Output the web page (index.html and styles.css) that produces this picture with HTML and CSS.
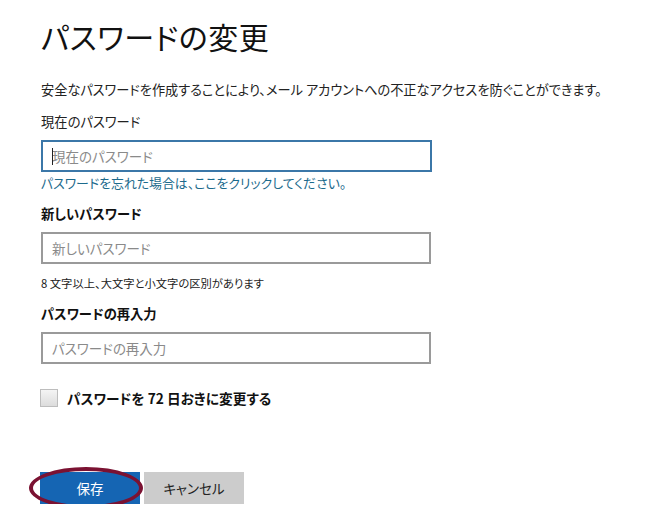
FILE: index.html
```html
<!DOCTYPE html>
<html lang="ja">
<head>
<meta charset="utf-8">
<title>パスワードの変更</title>
<link rel="stylesheet" href="styles.css">
</head>
<body>
<main class="page">
  <h1 class="title">パスワードの変更</h1>
  <p class="intro">安全なパスワードを作成することにより、メール アカウントへの不正なアクセスを防ぐことができます。</p>

  <div class="field">
    <label class="label" for="cur">現在のパスワード</label>
    <div class="input-wrap">
      <input id="cur" class="input input-focus" type="password" placeholder="現在のパスワード">
      <span class="caret"></span>
    </div>
    <a class="link" href="#">パスワードを忘れた場合は、ここをクリックしてください。</a>
  </div>

  <div class="field field-new">
    <label class="label label-bold" for="new">新しいパスワード</label>
    <input id="new" class="input" type="password" placeholder="新しいパスワード">
    <p class="hint">8 文字以上、大文字と小文字の区別があります</p>
  </div>

  <div class="field field-re">
    <label class="label label-bold" for="re">パスワードの再入力</label>
    <input id="re" class="input" type="password" placeholder="パスワードの再入力">
  </div>

  <label class="check">
    <span class="box"></span>
    <span class="check-text">パスワードを 72 日おきに変更する</span>
  </label>

  <div class="actions">
    <div class="save-wrap">
      <button class="btn btn-save" type="button">保存</button>
      <span class="ring"></span>
    </div>
    <button class="btn btn-cancel" type="button">キャンセル</button>
  </div>
</main>
</body>
</html>
```
FILE: styles.css
```css
* { box-sizing: border-box; }
html, body { margin: 0; padding: 0; background: #fff; }
body {
  font-family: "Noto Sans CJK JP", "Noto Sans", sans-serif;
  font-feature-settings: "palt";
  color: #222;
}
.page {
  padding: 18px 0 0 41px;
  width: 651px;
}
.title {
  margin: 0;
  font-size: 30px;
  font-weight: 400;
  line-height: 36px;
  color: #111;
  letter-spacing: 0.5px;
}
.intro {
  margin: 26px 0 0;
  font-size: 13.2px;
  line-height: 20px;
  color: #222;
}
.field { display: flex; flex-direction: column; align-items: flex-start; }
.label {
  margin-top: 12px;
  font-size: 13.3px;
  line-height: 20px;
  color: #222;
}
.label-bold { font-weight: 700; color: #111; }
.input-wrap { position: relative; margin-top: 8px; }
.input {
  display: block;
  width: 390px;
  height: 32px;
  margin: 8px 0 0;
  padding: 0 9px;
  border: 2px solid #9a9a9a;
  background: #fff;
  font-family: inherit;
  font-feature-settings: "palt";
  font-size: 13.5px;
  color: #222;
  outline: none;
}
.input-wrap .input { margin: 0; }
.input::placeholder { color: #8a8a8a; }
.input-focus { border-color: #3b77a8; width: 391px; }
.caret {
  position: absolute;
  left: 11px;
  top: 8px;
  width: 1px;
  height: 17px;
  background: #222;
}
.link {
  margin-top: 1px;
  font-size: 12.9px;
  line-height: 20px;
  color: #1c6a8c;
  text-decoration: none;
}
.field-new .label { margin-top: 11px; }
.hint {
  margin: 11px 0 0;
  font-size: 11.3px;
  line-height: 16px;
  color: #222;
}
.field-re .label { margin-top: 13px; }
.check {
  display: flex;
  align-items: center;
  gap: 9px;
  margin-top: 24px;
  margin-left: -1px;
}
.box {
  width: 18px;
  height: 18px;
  border: 1px solid #bdbdbd;
  background: linear-gradient(#f4f4f4, #dcdcdc);
}
.check-text {
  font-size: 13.7px;
  font-weight: 700;
  line-height: 20px;
  color: #111;
}
.actions {
  display: flex;
  gap: 4px;
  margin-top: 64px;
  margin-left: -1px;
}
.save-wrap { position: relative; }
.btn {
  display: block;
  width: 100px;
  height: 32px;
  border: 0;
  padding: 0;
  font-family: inherit;
  font-feature-settings: "palt";
  font-size: 13.5px;
  cursor: pointer;
}
.btn-save { background: #1565b3; color: #fff; }
.btn-cancel { background: #cccccc; color: #222; }
.ring {
  position: absolute;
  left: -11px;
  top: -5px;
  width: 114px;
  height: 42px;
  border: 4px solid #7b1232;
  border-radius: 50%;
  pointer-events: none;
}
```
